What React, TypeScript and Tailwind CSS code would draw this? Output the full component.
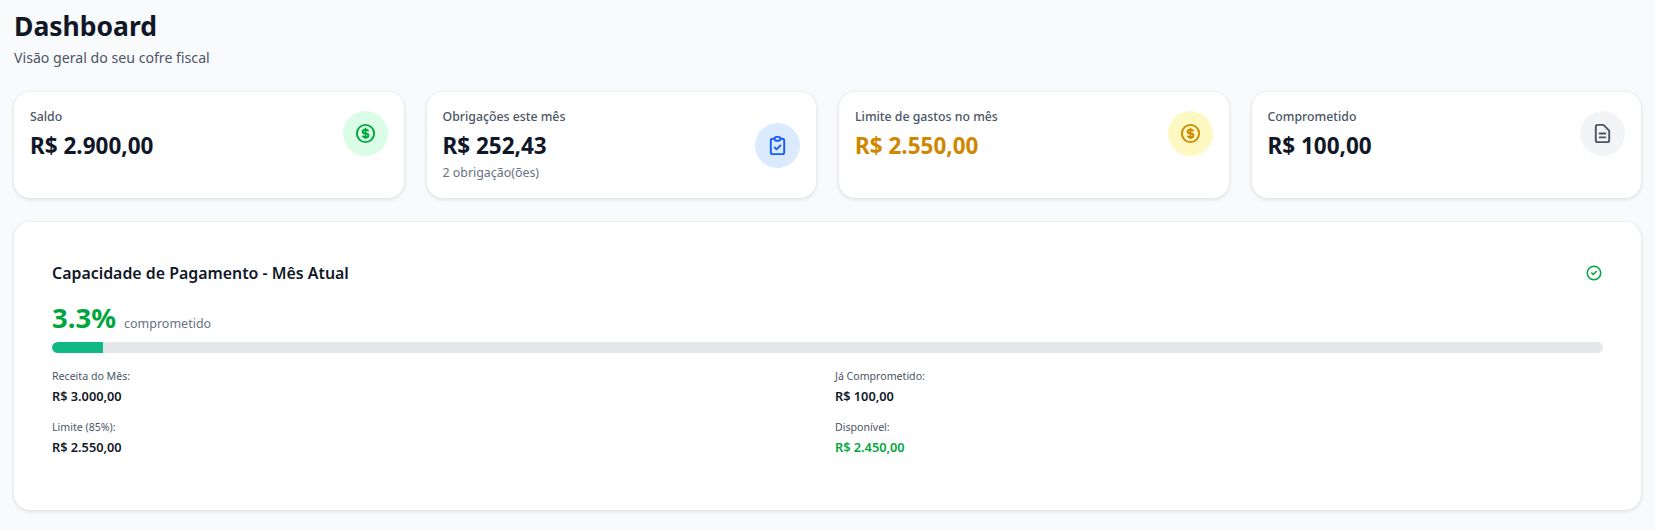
import type { ReactNode } from "react";
import {
  HiOutlineCheckCircle,
  HiOutlineClipboardCheck,
  HiOutlineCurrencyDollar,
  HiOutlineDocumentText,
} from "react-icons/hi";

function StatCard({
  label,
  value,
  valueClass,
  note,
  circleClass,
  icon,
}: {
  label: string;
  value: string;
  valueClass: string;
  note?: string;
  circleClass: string;
  icon: ReactNode;
}) {
  return (
    <div className="rounded-2xl bg-white p-4 shadow-[0_1px_4px_rgba(0,0,0,0.14)]">
      <div className="flex items-center justify-between">
        <div>
          <p className="text-[12.3px] leading-[18px] font-medium text-gray-600">{label}</p>
          <p className={`mt-[6px] text-[22.5px] leading-[27px] font-bold ${valueClass}`}>{value}</p>
          {note && <p className="mt-[5px] text-[12.4px] leading-[18px] text-gray-500">{note}</p>}
        </div>
        <div className={`flex h-[45px] w-[45px] items-center justify-center rounded-full ${circleClass}`}>
          {icon}
        </div>
      </div>
    </div>
  );
}

function Detail({ label, value, valueClass }: { label: string; value: string; valueClass: string }) {
  return (
    <div>
      <p className="text-[10.6px] leading-[16px] text-gray-600">{label}</p>
      <p className={`mt-[3px] text-[12.75px] leading-[18px] font-semibold ${valueClass}`}>{value}</p>
    </div>
  );
}

export default function App() {
  return (
    <main className="min-h-screen bg-gray-50 px-[14px] pt-[9px] font-['Noto_Sans',sans-serif]">
      <h1 className="text-[26.5px] leading-[34px] font-bold text-gray-900">Dashboard</h1>
      <p className="mt-[4px] text-[14.15px] leading-[21px] text-gray-600">Visão geral do seu cofre fiscal</p>

      <div className="mt-[24px] grid grid-cols-4 gap-[23px]">
        <StatCard
          label="Saldo"
          value="R$ 2.900,00"
          valueClass="text-gray-900"
          circleClass="bg-green-100"
          icon={<HiOutlineCurrencyDollar className="h-[23px] w-[23px] text-green-600" />}
        />
        <StatCard
          label="Obrigações este mês"
          value="R$ 252,43"
          valueClass="text-gray-900"
          note="2 obrigação(ões)"
          circleClass="bg-blue-100"
          icon={<HiOutlineClipboardCheck className="h-[23px] w-[23px] text-blue-600" />}
        />
        <StatCard
          label="Limite de gastos no mês"
          value="R$ 2.550,00"
          valueClass="text-yellow-600"
          circleClass="bg-yellow-100"
          icon={<HiOutlineCurrencyDollar className="h-[23px] w-[23px] text-yellow-600" />}
        />
        <StatCard
          label="Comprometido"
          value="R$ 100,00"
          valueClass="text-gray-900"
          circleClass="bg-gray-100"
          icon={<HiOutlineDocumentText className="h-[23px] w-[23px] text-gray-600" />}
        />
      </div>

      <section className="mt-[24px] h-[288px] rounded-2xl bg-white px-[38px] pt-[39px] shadow-[0_1px_4px_rgba(0,0,0,0.14)]">
        <div className="flex items-center justify-between">
          <h2 className="text-[15.9px] leading-[24px] font-semibold text-gray-900">Capacidade de Pagamento - Mês Atual</h2>
          <HiOutlineCheckCircle className="h-[18px] w-[18px] text-green-600" />
        </div>

        <div className="mt-[15px] flex items-baseline gap-[8px]">
          <span className="text-[27.5px] leading-[36px] font-bold text-green-600">3.3%</span>
          <span className="text-[12.5px] leading-[20px] text-gray-500">comprometido</span>
        </div>

        <div className="mt-[6px] h-[11px] overflow-hidden rounded-full bg-gray-200">
          <div className="h-full rounded-l-full bg-[#10b981]" style={{ width: "3.3%" }} />
        </div>

        <div className="mt-[15px] grid grid-cols-2 gap-x-[15px] gap-y-[14px]">
          <Detail label="Receita do Mês:" value="R$ 3.000,00" valueClass="text-gray-900" />
          <Detail label="Já Comprometido:" value="R$ 100,00" valueClass="text-gray-900" />
          <Detail label="Limite (85%):" value="R$ 2.550,00" valueClass="text-gray-900" />
          <Detail label="Disponível:" value="R$ 2.450,00" valueClass="text-green-600" />
        </div>
      </section>
    </main>
  );
}
